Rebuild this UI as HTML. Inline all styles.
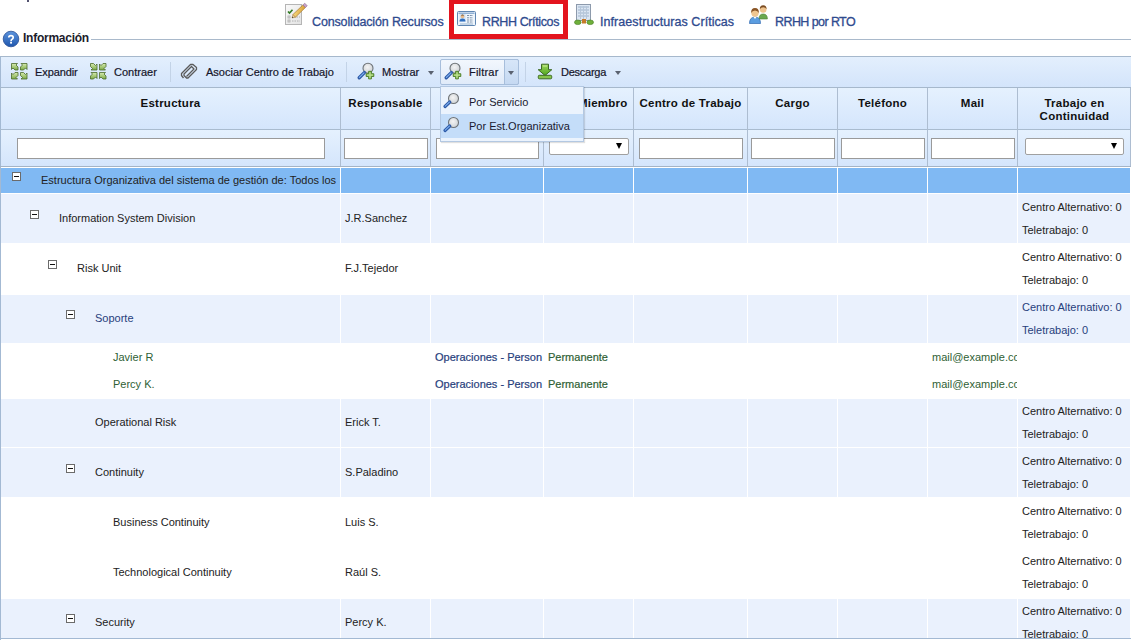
<!DOCTYPE html>
<html><head><meta charset="utf-8">
<style>
*{margin:0;padding:0;box-sizing:border-box}
html,body{width:1131px;height:640px;overflow:hidden;background:#fff;font-family:"Liberation Sans",sans-serif}
.a{position:absolute}
svg{position:absolute;overflow:visible}
.tab{position:absolute;font-size:12.5px;line-height:15px;color:#2e4a8e;top:15px;-webkit-text-stroke:0.3px #2e4a8e;white-space:nowrap}
.tb{position:absolute;font-size:11px;line-height:13px;color:#15152a;top:66px;-webkit-text-stroke:0.2px #15152a;white-space:nowrap}
.hd{position:absolute;top:97px;font-weight:bold;font-size:11.5px;color:#111;text-align:center;line-height:13px;letter-spacing:0.25px}
.vh{position:absolute;width:1px;background:#adbdd1;top:88px;height:78px}
.vb{position:absolute;width:1px;background:#fff;top:167px;height:471px}
.inp{position:absolute;top:138px;height:21px;background:#fff;border:1px solid #9a9a9a}
.sel{position:absolute;top:138px;height:17px;background:#fff;border:1px solid #a0a0a0;border-radius:2px}
.sel:after{content:"";position:absolute;right:6px;top:4px;border-left:3px solid transparent;border-right:3px solid transparent;border-top:6px solid #000}
.row{position:absolute;left:1px;width:1129px}
.t{position:absolute;font-size:11px;line-height:13px;color:#222;white-space:nowrap}
.bl{color:#27407c}
.gr{color:#2f5f35}
.mn{position:absolute;width:9px;height:9px;border:1px solid #6b6b6b;background:#fff}
.mn:after{content:"";position:absolute;left:1px;top:3px;width:5px;height:1px;background:#111}
.arr{position:absolute;top:71px;border-left:3.5px solid transparent;border-right:3.5px solid transparent;border-top:4px solid #5a6270}
</style></head><body>
<div class="a" style="left:27px;top:0;width:2px;height:2px;background:#1a1a40;border-radius:1px"></div>

<!-- ===== tabs ===== -->
<svg style="left:285px;top:3px" width="24" height="23" viewBox="0 0 24 23">
  <defs><linearGradient id="pg" x1="0" y1="0" x2="1" y2="1"><stop offset="0" stop-color="#fafafa"/><stop offset="1" stop-color="#e2e2e2"/></linearGradient>
  <linearGradient id="pc" x1="0" y1="0" x2="1" y2="0"><stop offset="0" stop-color="#f6d77a"/><stop offset="1" stop-color="#d9a23a"/></linearGradient></defs>
  <rect x="0.5" y="1.5" width="16" height="20" fill="url(#pg)" stroke="#b5b5b5"/>
  <path d="M3 8.5 l1.5 1.6 L7.5 6.8" stroke="#2f7a22" stroke-width="1.6" fill="none"/>
  <rect x="3" y="13" width="2" height="2" fill="none" stroke="#aaa" stroke-width=".8"/>
  <rect x="3" y="17" width="2" height="2" fill="none" stroke="#aaa" stroke-width=".8"/>
  <path d="M7 18h8M9 14h6" stroke="#b0b0b0" stroke-width="1" stroke-dasharray="1.5 1"/>
  <path d="M7.9 11.6 L17.96 1.93 L20.4 4.5 L10.4 14.2 Z" fill="url(#pc)" stroke="#a87a30" stroke-width=".7"/>
  <path d="M7 15 L7.9 11.6 L10.4 14.2 Z" fill="#ead2a0" stroke="#a87a30" stroke-width=".5"/>
  <path d="M7 15 L7.4 13.6 L8.5 14.6 Z" fill="#333"/>
  <path d="M17.96 1.93 L19.76 .2 L22.24 2.8 L20.4 4.5 Z" fill="#c9a0c8" stroke="#8a7090" stroke-width=".6"/>
</svg>
<div class="tab" style="left:312px;letter-spacing:-0.15px">Consolidación Recursos</div>

<div class="a" style="left:449px;top:-1px;width:119px;height:39.5px;border:5px solid #e3141e"></div>
<svg style="left:457px;top:11px" width="19" height="15" viewBox="0 0 19 15">
  <rect x="0.5" y="0.5" width="18" height="14" rx="1" fill="#eef5fc" stroke="#5f86b2"/>
  <rect x="1.5" y="1.5" width="16" height="1.5" fill="#8fb0d4"/>
  <rect x="2.5" y="3" width="6" height="7.5" fill="#d3e2f2"/>
  <circle cx="5.5" cy="5.5" r="1.8" fill="#e6b98a"/>
  <path d="M3.7 4.6 q1.8 -2.4 3.6 0" fill="#6b4a2a"/>
  <path d="M2.5 10.5 q0 -3 3 -3 q3 0 3 3 z" fill="#2f6fc0"/>
  <path d="M10 4.5h6M10 6.8h6M10 9h6M10 11h6" stroke="#5d7694" stroke-width=".8" stroke-dasharray="2 .8"/>
  <path d="M3 13h13" stroke="#9cb6d0" stroke-width="1"/>
</svg>
<div class="tab" style="left:482px;letter-spacing:-0.38px">RRHH Críticos</div>

<svg style="left:574px;top:3px" width="20" height="22" viewBox="0 0 20 22">
  <rect x="2.5" y="1.5" width="14" height="16" fill="#dbe6f3" stroke="#8d9aac"/>
  <path d="M4 4h11M4 7h11M4 10h11M4 13h11" stroke="#9fb3cc" stroke-width="1.2"/>
  <path d="M6.5 3v13M9.5 3v13M12.5 3v13" stroke="#b7c7da" stroke-width="1"/>
  <rect x="8" y="16" width="4" height="4.5" fill="#c77a2a"/>
  <ellipse cx="3.8" cy="19.3" rx="3.3" ry="2.3" fill="#6fb03a" stroke="#4a7d26" stroke-width=".6"/>
  <ellipse cx="16.2" cy="19.3" rx="3.3" ry="2.3" fill="#6fb03a" stroke="#4a7d26" stroke-width=".6"/>
</svg>
<div class="tab" style="left:600px;letter-spacing:0.06px">Infraestructuras Críticas</div>

<svg style="left:748px;top:3px" width="22" height="22" viewBox="0 0 22 22">
  <path d="M11 16 q0 -5 4.2 -5 q4.2 0 4.2 5 z" fill="#6aa84f" stroke="#4d7f35" stroke-width=".6"/>
  <circle cx="15.2" cy="6.5" r="3.3" fill="#efc48e"/>
  <path d="M11.8 6.3 q0 -4 3.4 -4 q3.4 0 3.4 4 q-1 -2 -3.4 -2 q-2.4 0 -3.4 2z" fill="#7b4c22"/>
  <path d="M1.5 20.5 q0 -6.5 5.5 -6.5 q5.5 0 5.5 6.5 z" fill="#5b9de0" stroke="#2f68b0" stroke-width=".7"/>
  <path d="M5.5 14 l1.5 2 l1.5 -2" fill="#fff"/>
  <circle cx="7" cy="10" r="3.7" fill="#f0c690"/>
  <path d="M3.2 10 q-.3 -5 3.8 -5 q4.1 0 3.8 5 q-1 -2.5 -3.8 -2.5 q-2.8 0 -3.8 2.5z" fill="#8a5526"/>
</svg>
<div class="tab" style="left:775px;letter-spacing:-0.58px">RRHH por RTO</div>

<!-- ===== Informacion ===== -->
<svg style="left:2px;top:30px" width="18" height="18" viewBox="0 0 18 18">
  <defs><linearGradient id="qg" x1="0" y1="0" x2="0" y2="1"><stop offset="0" stop-color="#5d95de"/><stop offset="1" stop-color="#1f56ad"/></linearGradient></defs>
  <circle cx="9" cy="9" r="7.8" fill="url(#qg)" stroke="#2a4f95" stroke-width=".8"/>
  <path d="M6.8 7.6 q0 -2 2.2 -2 q2.2 0 2.2 1.9 q0 1.2 -1.2 1.8 q-.9 .4 -.9 1.6" stroke="#fff" stroke-width="1.7" fill="none"/>
  <rect x="8.1" y="11.7" width="1.9" height="1.9" fill="#fff"/>
</svg>
<div class="a" style="left:23px;top:31px;font-size:12px;line-height:14px;font-weight:bold;color:#1c1c2c;letter-spacing:-0.25px">Información</div>
<div class="a" style="left:91px;top:39px;width:1040px;height:1px;background:#a9b9cb"></div>

<!-- ===== toolbar ===== -->
<div class="a" style="left:0;top:56px;width:1131px;height:32px;background:linear-gradient(#e3effd,#d3e4fb);border-top:1px solid #a6b8cc;border-left:1px solid #a3b9d3"></div>
<div class="a" style="left:0;top:87px;width:1131px;height:1px;background:#a6b8cc"></div>

<svg style="left:11px;top:63px" width="17" height="17" viewBox="0 0 17 17">
  <defs><linearGradient id="ag" x1="0" y1="0" x2="0" y2="1"><stop offset="0" stop-color="#d6ebb0"/><stop offset="1" stop-color="#7dab48"/></linearGradient></defs>
  <g fill="url(#ag)" stroke="#4a6a2a" stroke-width=".8" stroke-linejoin="round">
    <path d="M.5 .5H6.5L5 2L7 4V7H4L2 5L.5 6.5Z"/>
    <path d="M16 .5H10L11.5 2L9.5 4V7H12.5L14.5 5L16 6.5Z"/>
    <path d="M.5 16H6.5L5 14.5L7 12.5V9.5H4L2 11.5L.5 10Z"/>
    <path d="M16 16H10L11.5 14.5L9.5 12.5V9.5H12.5L14.5 11.5L16 10Z"/>
  </g>
</svg>
<div class="tb" style="left:35px;letter-spacing:-0.1px">Expandir</div>

<svg style="left:90px;top:63px" width="17" height="17" viewBox="0 0 17 17">
  <g fill="url(#ag)" stroke="#4a6a2a" stroke-width=".8" stroke-linejoin="round">
    <path d="M7 7H1L2.5 5.5L.5 3.5V.5H3.5L5.5 2.5L7 1Z"/>
    <path d="M9.5 7H15.5L14 5.5L16 3.5V.5H13L11 2.5L9.5 1Z"/>
    <path d="M7 9.5H1L2.5 11L.5 13V16H3.5L5.5 14L7 15.5Z"/>
    <path d="M9.5 9.5H15.5L14 11L16 13V16H13L11 14L9.5 15.5Z"/>
  </g>
</svg>
<div class="tb" style="left:114px">Contraer</div>
<div class="a" style="left:170px;top:62px;width:1px;height:20px;background:#c3d3e7"></div>

<svg style="left:180px;top:63px" width="18" height="17" viewBox="0 0 18 17">
  <path d="M3.5 15 L1.5 12.5 L1.5 10.5 L10.5 1.5 L13 1.5 L16.5 4.5 L16.5 6.5 L8 15 L6.5 15 L4 12.5 L4 11 L11.5 3.5 L14 6 L6.5 13.5" fill="none" stroke="#5a5a5a" stroke-width="1.3" stroke-linejoin="round"/>
</svg>
<div class="tb" style="left:206px">Asociar Centro de Trabajo</div>
<div class="a" style="left:346px;top:62px;width:1px;height:20px;background:#c3d3e7"></div>

<svg style="left:357px;top:62px" width="18" height="18" viewBox="0 0 18 18">
  <defs><radialGradient id="lg" cx=".45" cy=".4" r=".6"><stop offset="0" stop-color="#f4f4f4"/><stop offset="1" stop-color="#cfd3d6"/></radialGradient>
  <linearGradient id="hg" x1="0" y1="0" x2="1" y2="1"><stop offset="0" stop-color="#6ea2e6"/><stop offset="1" stop-color="#2654a8"/></linearGradient></defs>
  <circle cx="11" cy="6.2" r="5" fill="url(#lg)" stroke="#6f7478" stroke-width="1.1"/>
  <path d="M2.2 15.8 L7.4 10.6" stroke="#2d5aa8" stroke-width="3.4" stroke-linecap="round"/>
  <path d="M2.4 15.4 L7 10.8" stroke="#7fb0ee" stroke-width="1.2" stroke-linecap="round"/>
  <path d="M11.6 9.3h2.8v2.4h2.4v2.8h-2.4v2.4h-2.8v-2.4h-2.4v-2.8h2.4z" fill="#8cc05a" stroke="#4a7a25" stroke-width=".9" stroke-linejoin="round"/>
  <path d="M13 10.3v6M10 13.1h6" stroke="#c8e8a0" stroke-width=".9"/>
</svg>
<div class="tb" style="left:382px">Mostrar</div>
<div class="arr" style="left:428px"></div>

<div class="a" style="left:440px;top:59px;width:79px;height:26px;border:1px solid #a7bedb;border-radius:2px;background:linear-gradient(#f2f7fd,#e0ebf9)"></div>
<div class="a" style="left:504px;top:59px;width:15px;height:26px;border:1px solid #a7bedb;border-radius:0 2px 2px 0;background:linear-gradient(#d7e6f8,#c5d9f2)"></div>
<svg style="left:444px;top:62px" width="18" height="18" viewBox="0 0 18 18">
  <circle cx="11" cy="6.2" r="5" fill="url(#lg)" stroke="#6f7478" stroke-width="1.1"/>
  <path d="M2.2 15.8 L7.4 10.6" stroke="#2d5aa8" stroke-width="3.4" stroke-linecap="round"/>
  <path d="M2.4 15.4 L7 10.8" stroke="#7fb0ee" stroke-width="1.2" stroke-linecap="round"/>
  <path d="M11.6 9.3h2.8v2.4h2.4v2.8h-2.4v2.4h-2.8v-2.4h-2.4v-2.8h2.4z" fill="#8cc05a" stroke="#4a7a25" stroke-width=".9" stroke-linejoin="round"/>
  <path d="M13 10.3v6M10 13.1h6" stroke="#c8e8a0" stroke-width=".9"/>
</svg>
<div class="tb" style="left:469px;letter-spacing:0.2px">Filtrar</div>
<div class="arr" style="left:508px"></div>
<div class="a" style="left:525px;top:62px;width:1px;height:20px;background:#c3d3e7"></div>

<svg style="left:537px;top:63px" width="16" height="17" viewBox="0 0 16 17">
  <defs><linearGradient id="dg" x1="0" y1="0" x2="0" y2="1"><stop offset="0" stop-color="#9fd65e"/><stop offset="1" stop-color="#4ea51d"/></linearGradient></defs>
  <path d="M4.5 1.2h7v5.5h3.3L8 12.5 L1.2 6.7h3.3z" fill="url(#dg)" stroke="#3d6a24" stroke-width="1"/>
  <path d="M6 3h4" stroke="#c9ef9a" stroke-width="1"/>
  <rect x="1.3" y="12.3" width="13.4" height="3.5" rx="1" fill="#86c54a" stroke="#3d6a24" stroke-width="1"/>
</svg>
<div class="tb" style="left:561px;letter-spacing:-0.25px">Descarga</div>
<div class="arr" style="left:615px"></div>

<!-- ===== header ===== -->
<div class="a" style="left:0;top:88px;width:1131px;height:42px;background:linear-gradient(#e5f1fe,#d4e5fc);border-left:1px solid #a3b9d3"></div>
<div class="a" style="left:0;top:129px;width:1131px;height:1px;background:#a9bbcf"></div>
<div class="a" style="left:0;top:130px;width:1131px;height:37px;background:linear-gradient(#e5f1fe,#d4e5fc);border-left:1px solid #a3b9d3"></div>
<div class="a" style="left:0;top:166px;width:1131px;height:1px;background:#a4b4c6"></div>

<div class="vh" style="left:340px"></div>
<div class="vh" style="left:430px"></div>
<div class="vh" style="left:543px"></div>
<div class="vh" style="left:633px"></div>
<div class="vh" style="left:747px"></div>
<div class="vh" style="left:837px"></div>
<div class="vh" style="left:927px"></div>
<div class="vh" style="left:1017px"></div>
<div class="vh" style="left:1130px;top:88px;height:78px"></div>

<div class="hd" style="left:1px;width:339px">Estructura</div>
<div class="hd" style="left:341px;width:89px">Responsable</div>
<div class="hd" style="left:544px;width:89px">Tipo Miembro</div>
<div class="hd" style="left:634px;width:113px">Centro de Trabajo</div>
<div class="hd" style="left:748px;width:89px">Cargo</div>
<div class="hd" style="left:838px;width:89px">Teléfono</div>
<div class="hd" style="left:928px;width:89px">Mail</div>
<div class="hd" style="left:1018px;width:113px">Trabajo en<br>Continuidad</div>

<div class="inp" style="left:17px;width:308px"></div>
<div class="inp" style="left:344px;width:84px"></div>
<div class="inp" style="left:436px;width:103px"></div>
<div class="sel" style="left:549px;width:80px"></div>
<div class="inp" style="left:639px;width:104px"></div>
<div class="inp" style="left:751px;width:84px"></div>
<div class="inp" style="left:841px;width:84px"></div>
<div class="inp" style="left:931px;width:84px"></div>
<div class="sel" style="left:1025px;width:99px"></div>

<!-- ===== rows ===== -->
<div class="a" style="left:0;top:167px;width:1px;height:473px;background:#a3b9d3"></div>
<div class="row" style="top:167px;height:1px;background:#fff"></div>
<div class="row" style="top:168px;height:25px;background:#80b9f3"></div>
<div class="row" style="top:193px;height:1px;background:#fff"></div>
<div class="row" style="top:194px;height:49px;background:#eaf1fd"></div>
<div class="row" style="top:243px;height:52px;background:#fff"></div>
<div class="row" style="top:295px;height:48px;background:#eaf1fd"></div>
<div class="row" style="top:343px;height:56px;background:#fff"></div>
<div class="row" style="top:399px;height:48px;background:#eaf1fd"></div>
<div class="row" style="top:447px;height:1px;background:#fff"></div>
<div class="row" style="top:448px;height:49px;background:#eaf1fd"></div>
<div class="row" style="top:497px;height:102px;background:#fff"></div>
<div class="row" style="top:599px;height:39px;background:#eaf1fd"></div>
<div class="a" style="left:0;top:638px;width:1131px;height:1px;background:#a3b9d3"></div>

<div class="vb" style="left:340px"></div>
<div class="vb" style="left:430px"></div>
<div class="vb" style="left:543px"></div>
<div class="vb" style="left:633px"></div>
<div class="vb" style="left:747px"></div>
<div class="vb" style="left:837px"></div>
<div class="vb" style="left:927px"></div>
<div class="vb" style="left:1017px"></div>

<div class="mn" style="left:12px;top:172px"></div>
<div class="t" style="left:41px;top:174px">Estructura Organizativa del sistema de gestión de: Todos los</div>

<div class="mn" style="left:30px;top:210px"></div>
<div class="t" style="left:59px;top:212px">Information System Division</div>
<div class="t" style="left:345px;top:212px">J.R.Sanchez</div>

<div class="mn" style="left:48px;top:260px"></div>
<div class="t" style="left:77px;top:262px">Risk Unit</div>
<div class="t" style="left:345px;top:262px">F.J.Tejedor</div>

<div class="mn" style="left:66px;top:310px"></div>
<div class="t bl" style="left:95px;top:312px">Soporte</div>

<div class="t gr" style="left:113px;top:351px">Javier R</div>
<div class="t bl" style="left:435px;top:351px;width:108px;overflow:hidden;-webkit-text-stroke:0.2px #27407c">Operaciones - Person</div>
<div class="t gr" style="left:548px;top:351px;-webkit-text-stroke:0.2px #2f5f35">Permanente</div>
<div class="t gr" style="left:932px;top:351px;width:85px;overflow:hidden">mail@example.com</div>
<div class="t gr" style="left:113px;top:378px">Percy K.</div>
<div class="t bl" style="left:435px;top:378px;width:108px;overflow:hidden;-webkit-text-stroke:0.2px #27407c">Operaciones - Person</div>
<div class="t gr" style="left:548px;top:378px;-webkit-text-stroke:0.2px #2f5f35">Permanente</div>
<div class="t gr" style="left:932px;top:378px;width:85px;overflow:hidden">mail@example.com</div>

<div class="t" style="left:95px;top:416px">Operational Risk</div>
<div class="t" style="left:345px;top:416px">Erick T.</div>

<div class="mn" style="left:66px;top:464px"></div>
<div class="t" style="left:95px;top:466px">Continuity</div>
<div class="t" style="left:345px;top:466px">S.Paladino</div>

<div class="t" style="left:113px;top:516px">Business Continuity</div>
<div class="t" style="left:345px;top:516px">Luis S.</div>
<div class="t" style="left:113px;top:566px">Technological Continuity</div>
<div class="t" style="left:345px;top:566px">Raúl S.</div>

<div class="mn" style="left:66px;top:614px"></div>
<div class="t" style="left:95px;top:616px">Security</div>
<div class="t" style="left:345px;top:616px">Percy K.</div>

<div class="t" style="left:1022px;top:201px">Centro Alternativo: 0</div>
<div class="t" style="left:1022px;top:224px">Teletrabajo: 0</div>
<div class="t" style="left:1022px;top:251px">Centro Alternativo: 0</div>
<div class="t" style="left:1022px;top:274px">Teletrabajo: 0</div>
<div class="t bl" style="left:1022px;top:301px">Centro Alternativo: 0</div>
<div class="t bl" style="left:1022px;top:324px">Teletrabajo: 0</div>
<div class="t" style="left:1022px;top:405px">Centro Alternativo: 0</div>
<div class="t" style="left:1022px;top:428px">Teletrabajo: 0</div>
<div class="t" style="left:1022px;top:455px">Centro Alternativo: 0</div>
<div class="t" style="left:1022px;top:478px">Teletrabajo: 0</div>
<div class="t" style="left:1022px;top:505px">Centro Alternativo: 0</div>
<div class="t" style="left:1022px;top:528px">Teletrabajo: 0</div>
<div class="t" style="left:1022px;top:555px">Centro Alternativo: 0</div>
<div class="t" style="left:1022px;top:578px">Teletrabajo: 0</div>
<div class="t" style="left:1022px;top:605px">Centro Alternativo: 0</div>
<div class="a" style="left:1018px;top:599px;width:112px;height:39px;overflow:hidden"><div class="t" style="left:4px;top:29px">Teletrabajo: 0</div></div>

<!-- ===== dropdown menu ===== -->
<div class="a" style="left:440px;top:86px;width:144px;height:56px;background:#ebf3fd;border:1px solid #b3c8e2;box-shadow:1px 1px 1px rgba(0,0,0,.12)"></div>
<div class="a" style="left:441px;top:114px;width:142px;height:24px;background:#c4ddf9"></div>
<svg style="left:443px;top:92px" width="16" height="16" viewBox="0 0 16 16">
  <circle cx="10.5" cy="6.5" r="5" fill="url(#lg)" stroke="#6f7478" stroke-width="1.1"/>
  <path d="M2 14.5 L6.8 10" stroke="#2d5aa8" stroke-width="3.2" stroke-linecap="round"/>
  <path d="M2.2 14.1 L6.4 10.2" stroke="#7fb0ee" stroke-width="1.1" stroke-linecap="round"/>
</svg>
<svg style="left:443px;top:116px" width="16" height="16" viewBox="0 0 16 16">
  <circle cx="10.5" cy="6.5" r="5" fill="url(#lg)" stroke="#6f7478" stroke-width="1.1"/>
  <path d="M2 14.5 L6.8 10" stroke="#2d5aa8" stroke-width="3.2" stroke-linecap="round"/>
  <path d="M2.2 14.1 L6.4 10.2" stroke="#7fb0ee" stroke-width="1.1" stroke-linecap="round"/>
</svg>
<div class="tb" style="left:469px;top:96px;-webkit-text-stroke:0;color:#1a1a30">Por Servicio</div>
<div class="tb" style="left:469px;top:120px;-webkit-text-stroke:0;color:#1a1a30">Por Est.Organizativa</div>
</body></html>
